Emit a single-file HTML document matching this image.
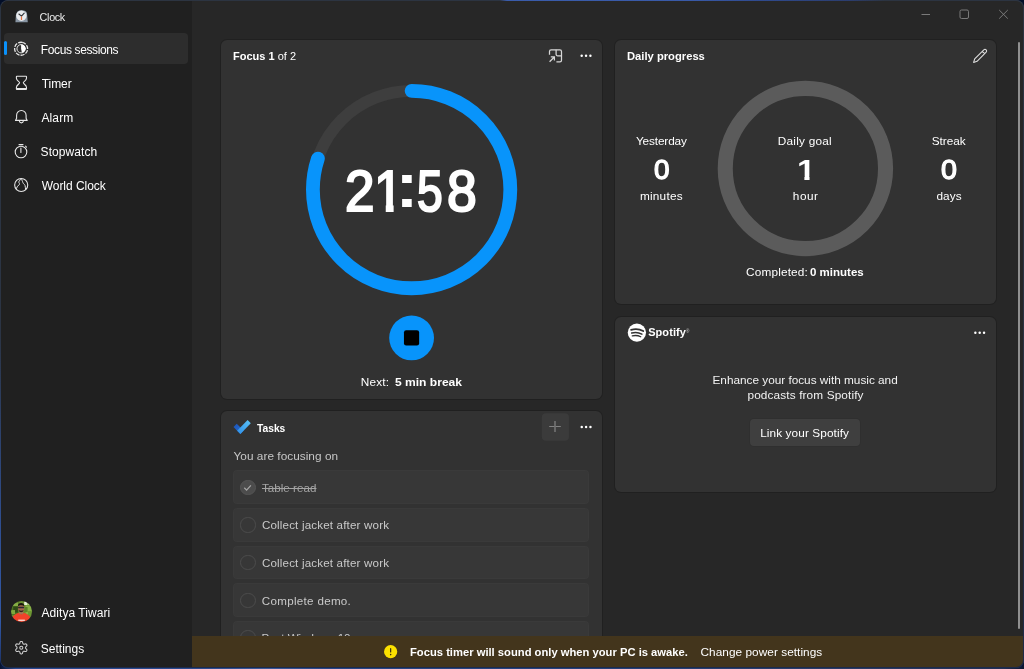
<!DOCTYPE html>
<html lang="en">
<head>
<meta charset="utf-8">
<title>Clock</title>
<style>
*{box-sizing:border-box;margin:0;padding:0}
html,body{width:1024px;height:669px;overflow:hidden;background:#020e28}
body{font-family:"Liberation Sans",sans-serif;color:#fff;position:relative}
.abs{position:absolute}
#desk{position:absolute;left:0;top:0;width:1024px;height:669px;background:linear-gradient(180deg,#020e28 0,#020e28 650px,rgba(2,14,40,0) 667px),linear-gradient(90deg,#07122e 0,#27488f 1.5%,#2a4a90 20%,#3a5a9c 26%,#27468a 32%,#23407c 60%,#2a3a66 85%,#222f55 98%,#0c1530 100%)}
#frame{position:absolute;left:0;top:0;width:1024px;height:668.3px;border-radius:8px;background:linear-gradient(180deg,#2c3441 0,#2b3444 50%,#2f4f92 80%,#3158a6 93%,#1b2f60 100%)}
#frame:after{content:"";position:absolute;left:1.3px;top:0;right:0;bottom:0;border-radius:8px;background:linear-gradient(180deg,#2c3441 0,#2a3242 60%,#1e2a48 100%)}
#topglow{position:absolute;left:0;top:0;width:1024px;height:1.1px;background:linear-gradient(90deg,rgba(58,92,171,0) 0,rgba(58,92,171,0) 500px,#3a5cab 507px,#395aa8 690px,#2f4a8e 760px,#2b3d6e 850px,rgba(43,61,110,0) 885px)}
#win{will-change:transform;position:absolute;left:1px;top:1px;width:1022px;height:666.3px;border-radius:7px;overflow:hidden;background:#272727}
#side{position:absolute;left:0;top:0;width:191.3px;height:667px;background:#202020}
.nav{position:absolute;left:3px;width:184px;height:31.4px;border-radius:4px}
.nav.sel{background:#2d2d2d}
.pill{position:absolute;left:0;top:8.8px;width:3px;height:13.8px;border-radius:1.5px;background:#0a91fb}
.card{position:absolute;background:#323232;border-radius:6px;box-shadow:0 0 0 1px rgba(0,0,0,.16)}
.tx{position:absolute;white-space:nowrap;transform-origin:0 50%}
.task{position:absolute;background:#373737;border-radius:4px;box-shadow:inset 0 0 0 1px rgba(255,255,255,.016)}
.ck{position:absolute;width:15.2px;height:15.2px;border-radius:50%;border:1px solid #4c4c4c}
svg{overflow:visible}
</style>
</head>
<body>
<div id="desk"></div>
<div id="frame"></div>
<div id="topglow"></div>
<div id="win">
<nav id="side">
<svg class="abs" style="left:13.7px;top:8.7px;width:13.2px;height:12.6px" viewBox="0 0 13.2 12.6">
<defs><linearGradient id="cg" x1="0" y1="0" x2="0" y2="1"><stop offset="0" stop-color="#9aa5b0"/><stop offset="1" stop-color="#8592a0"/></linearGradient></defs>
<path d="M0.4 12.3 L0.9 5.6 Q1.4 0.3 6.6 0.3 Q11.3 0.3 12 3.2 L12.8 12.3 Z" fill="url(#cg)"/>
<circle cx="6.4" cy="5.7" r="5.2" fill="#e9ebee"/>
<path d="M6.5 6.1 L3.9 4 M6.5 6.1 L9.2 3.1" stroke="#33363b" stroke-width="1.15" stroke-linecap="round" fill="none"/>
<path d="M6.5 6.5 V10" stroke="#e8713f" stroke-width="1.2" stroke-linecap="butt"/>
</svg>
<div class="tx" id="t_clock" style="left:38.62px;top:10px;font-size:10.8px;line-height:13px;color:#ececec;letter-spacing:-0.34px">Clock</div>
<div class="nav sel" style="top:31.7px"><div class="pill"></div><div class="tx" id="t_nav0" style="left:36.85px;top:10.3px;font-size:12px;line-height:14.4px;letter-spacing:-0.39px">Focus sessions</div></div>
<div class="nav" style="top:65.7px"><div class="tx" id="t_nav1" style="left:37.69px;top:10.3px;font-size:12px;line-height:14.4px;letter-spacing:-0.04px">Timer</div></div>
<div class="nav" style="top:99.7px"><div class="tx" id="t_nav2" style="left:37.5px;top:10.3px;font-size:12px;line-height:14.4px;letter-spacing:0.1px">Alarm</div></div>
<div class="nav" style="top:133.7px"><div class="tx" id="t_nav3" style="left:36.59px;top:10.3px;font-size:12px;line-height:14.4px;letter-spacing:0.07px">Stopwatch</div></div>
<div class="nav" style="top:167.7px"><div class="tx" id="t_nav4" style="left:37.68px;top:10.3px;font-size:12px;line-height:14.4px;letter-spacing:-0.03px">World Clock</div></div>
<svg class="abs" style="left:-1px;top:-1px;width:192px;height:230px" viewBox="0 0 192 230" fill="none" stroke="#e6e6e6" stroke-width="1.1" stroke-linecap="round" stroke-linejoin="round">
<circle cx="21.1" cy="48.75" r="6.5" stroke-width="1.3" stroke-dasharray="3.95 1.155" stroke-linecap="butt" transform="rotate(-80 21.1 48.75)"/>
<circle cx="21.1" cy="48.75" r="4.15" stroke-width="1"/>
<path d="M21.1 44.6 A4.15 4.15 0 0 1 21.9 52.85 L21.1 48.75 Z" fill="#fff" stroke="none"/>
<path d="M16.9 76.2 H26 Q26.5 76.2 26.5 76.7 V78.2 C26.5 80.8 23.3 81.6 23.3 82.8 C23.3 84 26.5 84.8 26.5 87.4 V88.9 Q26.5 89.4 26 89.4 H16.9 Q16.4 89.4 16.4 88.9 V87.4 C16.4 84.8 19.6 84 19.6 82.8 C19.6 81.6 16.4 80.8 16.4 78.2 V76.7 Q16.4 76.2 16.9 76.2 Z M16.9 88.5 H26"/>
<path d="M16.6 118.3 V115.2 A4.75 4.75 0 0 1 26.1 115.2 V118.3 L27.2 120.4 H15.5 Z M19.3 120.8 A2.1 2.6 0 0 0 23.4 120.8"/>
<circle cx="21" cy="152" r="5.8"/><path d="M19 144.6 H23 M20.9 148 V152.4 M25.6 146.2 L26.5 147.1"/>
<circle cx="21.2" cy="185" r="6.55"/>
<path d="M20.7 178.9 C20.2 180.6 18.4 181.3 18.9 182.6 C19.3 183.6 19.9 183.6 19.3 184.6 C18.6 185.8 17.3 185.8 17.1 187 C17 187.9 16.4 188.2 15.9 188.8 M21.6 178.9 C21.8 180.6 22.6 181.2 22.8 182.4 C23 183.6 24.5 184.2 25 185.4 C25.5 186.6 25.3 188.2 25.6 189.6" stroke-width="1"/>
</svg>
<svg class="abs" style="left:9.9px;top:600.4px;width:21.1px;height:21.1px" viewBox="0 0 21 21">
<defs><clipPath id="av"><circle cx="10.5" cy="10.5" r="10.45"/></clipPath><filter id="bl" x="-10%" y="-10%" width="120%" height="120%"><feGaussianBlur stdDeviation="0.55"/></filter></defs>
<g clip-path="url(#av)"><g filter="url(#bl)">
<rect x="-2" y="-2" width="25" height="25" fill="#6a8f30"/>
<rect x="-2" y="-2" width="9.5" height="16" fill="#4f7423"/><rect x="2.2" y="5.5" width="4.6" height="6" fill="#2f4a17"/><rect x="0" y="9" width="4" height="4" fill="#7fa83c"/><rect x="2" y="1.5" width="5" height="3.5" fill="#86ad45"/>
<rect x="13" y="-2" width="10" height="6" fill="#a9c77a"/><rect x="13.3" y="1" width="2.6" height="3" fill="#e6efd8"/><rect x="14.5" y="4.5" width="8" height="9" fill="#86b044"/><rect x="13.5" y="6" width="3" height="5" fill="#5d8429"/><rect x="17" y="10" width="4" height="4" fill="#6d9632"/>
<path d="M-1 23 C-0.5 16 3.5 13 8 11.8 L10.3 13.4 L12.6 11.8 C17 13 20.8 16 22 23 Z" fill="#f1432a"/>
<rect x="8.2" y="9.5" width="4" height="3.6" fill="#a87355"/>
<ellipse cx="10.1" cy="7.3" rx="3.05" ry="3.7" fill="#a06b4c"/>
<path d="M7.7 9 C8 12 12.2 12 12.5 9 C11.5 10 8.8 10 7.7 9 Z" fill="#2d221c"/>
<path d="M6.9 5.2 C6.4 0.8 13.7 0.8 13.2 5.2 C12 3.8 8.1 3.8 6.9 5.2 Z" fill="#15130f"/>
<rect x="7.1" y="5.65" width="5.9" height="1.6" rx="0.5" fill="#2a2530"/>
<rect x="7.2" y="18.5" width="6.6" height="1.5" fill="#fbd0c8"/>
</g></g></svg>
<div class="tx" id="t_acct" style="left:40.51px;top:605px;font-size:12px;line-height:14.4px;letter-spacing:0.05px">Aditya Tiwari</div>
<svg class="abs" style="left:-1px;top:629px;width:60px;height:38px" viewBox="0 630 60 38" fill="none" stroke="#cfcfcf" stroke-width="1.05" stroke-linejoin="round"><path d="M25.6 647.7 L25.58 648.07 L25.72 648.48 L26.37 649.06 L26.95 649.76 L26.92 650.32 L26.67 650.8 L26.38 651.26 L25.9 651.56 L25.01 651.41 L24.19 651.14 L23.77 651.22 L23.45 651.42 L23.12 651.6 L22.84 651.92 L22.66 652.77 L22.34 653.62 L21.84 653.88 L21.3 653.9 L20.76 653.88 L20.26 653.62 L19.94 652.77 L19.76 651.92 L19.48 651.6 L19.15 651.42 L18.83 651.22 L18.41 651.14 L17.59 651.41 L16.7 651.56 L16.22 651.26 L15.93 650.8 L15.68 650.32 L15.65 649.76 L16.23 649.06 L16.88 648.48 L17.02 648.07 L17 647.7 L17.02 647.33 L16.88 646.92 L16.23 646.34 L15.65 645.64 L15.68 645.08 L15.93 644.6 L16.22 644.14 L16.7 643.84 L17.59 643.99 L18.41 644.26 L18.83 644.18 L19.15 643.98 L19.48 643.8 L19.76 643.48 L19.94 642.63 L20.26 641.78 L20.76 641.52 L21.3 641.5 L21.84 641.52 L22.34 641.78 L22.66 642.63 L22.84 643.48 L23.12 643.8 L23.45 643.98 L23.77 644.18 L24.19 644.26 L25.01 643.99 L25.9 643.84 L26.38 644.14 L26.67 644.6 L26.92 645.08 L26.95 645.64 L26.37 646.34 L25.72 646.92 L25.58 647.33 Z"/><circle cx="21.3" cy="647.7" r="1.55"/></svg>
<div class="tx" id="t_set" style="left:39.78px;top:641px;font-size:12px;line-height:14.4px;letter-spacing:0.01px">Settings</div>
</nav>
<svg class="abs" style="left:-1px;top:-1px;width:1024px;height:30px" viewBox="0 0 1024 30" fill="none" stroke="#7e7e7e" stroke-width="0.95">
<path d="M921.5 14.5 H930"/><rect x="960" y="10" width="8.5" height="8.5" rx="1.5"/><path d="M999.2 10 L1007.8 18.6 M1007.8 10 L999.2 18.6"/>
</svg>
<div class="abs" style="left:1017px;top:41px;width:2px;height:586.5px;background:#909090;border-radius:1px"></div>
<section class="card" style="left:220px;top:38.5px;width:381px;height:359.5px">
<div class="tx" id="t_fh" style="left:11.61px;top:9.5px;font-size:11.6px;line-height:13.9px;transform:scaleX(0.9499)"><b>Focus 1</b> of 2</div>
<svg class="abs" style="left:0px;top:0px;width:381px;height:360px" viewBox="221 39.5 381 360">
<g fill="none" stroke="#d8d8d8" stroke-width="1.25">
<path d="M549.5 54.2 V50.9 A1.6 1.6 0 0 1 551.1 49.3 H559.9 A1.6 1.6 0 0 1 561.5 50.9 V59.7 A1.6 1.6 0 0 1 559.9 61.3 H556.4"/>
<path d="M556.1 49.3 V53.8 A1.5 1.5 0 0 0 557.6 55.3 H561.5"/>
<path d="M549.6 61.2 L554.3 56.5 M550.8 56.4 H554.4 V60"/>
</g>
<g fill="#fff"><circle cx="581.7" cy="55.3" r="1.22"/><circle cx="586.05" cy="55.3" r="1.22"/><circle cx="590.4" cy="55.3" r="1.22"/></g>
<circle cx="411.6" cy="189.05" r="98.7" fill="none" stroke="#3e3e3e" stroke-width="11.8"/>
<circle cx="411.6" cy="189.05" r="98.7" fill="none" stroke="#0894fb" stroke-width="13.8" stroke-linecap="round" stroke-dasharray="495.95 620.15" transform="rotate(-90 411.6 189.05)"/>
<circle cx="411.6" cy="337.45" r="22.4" fill="#0894fb"/><rect x="403.95" y="329.7" width="15.2" height="15.2" rx="2.2" fill="#000"/>
</svg>
<div id="time" class="abs" style="left:0;top:0"><span class="tx" id="t_tm0" style="left:123.66px;top:117.5px;font-size:57px;line-height:68.4px;transform:scaleX(0.9305);-webkit-text-stroke:2.2px #fff">2</span><span class="tx" id="t_tm1" style="left:152.84px;top:117.5px;font-size:57px;line-height:68.4px;transform:scaleX(0.9216);-webkit-text-stroke:2.2px #fff;clip-path:polygon(-10% 0,110% 0,110% 67%,67.2% 67%,67.2% 100%,40.2% 100%,40.2% 67%,-10% 67%)">1</span><span class="tx" id="t_tm2" style="left:175.6px;top:112.5px;font-size:57px;line-height:68.4px;transform:scaleX(1.2508);-webkit-text-stroke:2.2px #fff">:</span><span class="tx" id="t_tm3" style="left:196.19px;top:117.5px;font-size:57px;line-height:68.4px;transform:scaleX(0.8102);-webkit-text-stroke:2.2px #fff">5</span><span class="tx" id="t_tm4" style="left:225.93px;top:117.5px;font-size:57px;line-height:68.4px;transform:scaleX(0.9389);-webkit-text-stroke:2.2px #fff">8</span></div>
<div class="tx" id="t_next" style="left:139.65px;top:335.5px;font-size:11.8px;line-height:14.2px;letter-spacing:0.24px">Next:</div>
<div class="tx" id="t_next2" style="left:173.73px;top:335.5px;font-size:11.8px;line-height:14.2px;font-weight:bold;transform:scaleX(1.022)">5 min break</div>
</section>
<section class="card" style="left:220px;top:410px;width:381px;height:289px">
<svg class="abs" style="left:0;top:0;width:381px;height:60px" viewBox="221 411 381 60">
<defs><linearGradient id="td" x1="0" y1="0" x2="1" y2="1"><stop offset="0" stop-color="#1a52b5"/><stop offset="1" stop-color="#2a73d8"/></linearGradient>
<linearGradient id="tl" x1="1" y1="0" x2="0" y2="1"><stop offset="0" stop-color="#5cc4f7"/><stop offset="1" stop-color="#2d8ee8"/></linearGradient></defs>
<path d="M233.5 426.9 L236.7 423.7 L243.6 430.6 L240.4 433.9 Z" fill="url(#td)"/>
<path d="M240.4 433.9 L237.15 430.65 L247.6 420.1 L250.8 423.3 Z" fill="url(#tl)"/>
<rect x="541.85" y="413.3" width="27.05" height="27.4" rx="4" fill="#3b3b3b"/>
<path d="M549.2 426.5 H560.8" stroke="#8a8a8a" stroke-width="0.9"/><path d="M555 421 V432" stroke="#707070" stroke-width="1.7"/>
<g fill="#fff"><circle cx="581.75" cy="427" r="1.22"/><circle cx="586.1" cy="427" r="1.22"/><circle cx="590.45" cy="427" r="1.22"/></g>
</svg>
<div class="tx" id="t_th" style="left:36.24px;top:11px;font-size:11.5px;line-height:13.8px;font-weight:bold;transform:scaleX(0.8908)">Tasks</div>
<div class="tx" id="t_you" style="left:12.49px;top:38px;font-size:11.8px;line-height:14.2px;color:#c6c6c6;letter-spacing:0.04px">You are focusing on</div>
<div class="task" style="left:12.3px;top:59.35px;width:356.1px;height:33.5px">
<div class="ck" style="left:7.1px;top:9.35px;background:#4c4c4c;border-color:#555"></div>
<svg class="abs" style="left:9.9px;top:12.6px;width:9px;height:9px" viewBox="0 0 9 9"><path d="M1.3 4.8 L3.6 7.1 L7.9 2.3" fill="none" stroke="#a6a6a6" stroke-width="1.25"/></svg>
<div class="tx" id="t_task0" style="left:28.69px;top:10.65px;font-size:11.6px;line-height:13.9px;color:#a4a4a4;letter-spacing:0.03px;text-decoration:line-through">Table read</div>
</div>
<div class="task" style="left:12.3px;top:97.05px;width:356.1px;height:33.5px">
<div class="ck" style="left:7.1px;top:9.35px"></div>
<div class="tx" id="t_task1" style="left:28.58px;top:9.95px;font-size:11.6px;line-height:13.9px;color:#c9c9c9;letter-spacing:0.17px">Collect jacket after work</div>
</div>
<div class="task" style="left:12.3px;top:134.75px;width:356.1px;height:33.5px">
<div class="ck" style="left:7.1px;top:9.35px"></div>
<div class="tx" id="t_task2" style="left:28.58px;top:10.25px;font-size:11.6px;line-height:13.9px;color:#c9c9c9;letter-spacing:0.17px">Collect jacket after work</div>
</div>
<div class="task" style="left:12.3px;top:172.45px;width:356.1px;height:33.5px">
<div class="ck" style="left:7.1px;top:9.35px"></div>
<div class="tx" id="t_task3" style="left:28.46px;top:10.55px;font-size:11.6px;line-height:13.9px;color:#c9c9c9;letter-spacing:0.31px">Complete demo.</div>
</div>
<div class="task" style="left:12.3px;top:210.15px;width:356.1px;height:33.5px">
<div class="ck" style="left:7.1px;top:9.35px"></div>
<div class="tx" id="t_task4" style="left:28.12px;top:9.85px;font-size:11.6px;line-height:13.9px;color:#c9c9c9;letter-spacing:-0.03px">Post Windows 10</div>
</div>
</section>
<section class="card" style="left:613.5px;top:38.5px;width:381.5px;height:264.5px">
<div class="tx" id="t_dh" style="left:12px;top:9.5px;font-size:11.6px;line-height:13.9px;font-weight:bold;transform:scaleX(0.9665)">Daily progress</div>
<svg class="abs" style="left:0;top:0;width:381px;height:264px" viewBox="614.5 39.5 381 264">
<g transform="translate(973.1 61.9) rotate(-45)" fill="none" stroke="#e0e0e0" stroke-width="1.05" stroke-linejoin="round"><path d="M0 0 L3.2 -1.65 H16.1 A1.65 1.65 0 0 1 16.1 1.65 H3.2 Z M14 -1.65 V1.65"/></g>
<circle cx="804.9" cy="168" r="80.15" fill="none" stroke="#5b5b5b" stroke-width="15.1"/>
</svg>
<div class="tx" id="t_y1" style="left:21.42px;top:94.5px;font-size:11.8px;line-height:14.2px;letter-spacing:-0.13px">Yesterday</div>
<div class="tx" id="t_y2" style="left:39.61px;top:113.5px;font-size:27.8px;line-height:33.4px;transform:scaleX(1.003);-webkit-text-stroke:1.3px #fff">0</div>
<div class="tx" id="t_y3" style="left:25.39px;top:149.5px;font-size:11.8px;line-height:14.2px;letter-spacing:0.24px">minutes</div>
<div class="tx" id="t_g1" style="left:163.29px;top:94.5px;font-size:11.8px;line-height:14.2px;letter-spacing:0.23px">Daily goal</div>
<div class="tx" id="t_g2" style="left:182.28px;top:112.5px;font-size:30.1px;line-height:36.1px;font-weight:bold;transform:scaleX(1.1006);clip-path:polygon(-10% 0,110% 0,110% 68%,68% 68%,68% 100%,40% 100%,40% 68%,-10% 68%)">1</div>
<div class="tx" id="t_g3" style="left:178.37px;top:149.5px;font-size:11.8px;line-height:14.2px;letter-spacing:0.51px">hour</div>
<div class="tx" id="t_s1" style="left:317.24px;top:94.5px;font-size:11.8px;line-height:14.2px;letter-spacing:-0.04px">Streak</div>
<div class="tx" id="t_s2" style="left:326.41px;top:113.5px;font-size:27.8px;line-height:33.4px;transform:scaleX(1.0302);-webkit-text-stroke:1.3px #fff">0</div>
<div class="tx" id="t_s3" style="left:321.98px;top:149.5px;font-size:11.8px;line-height:14.2px;letter-spacing:0.09px">days</div>
<div class="tx" id="t_c1" style="left:131.56px;top:225.5px;font-size:11.8px;line-height:14.2px;letter-spacing:0.16px">Completed:</div>
<div class="tx" id="t_c2" style="left:195.94px;top:225.5px;font-size:11.8px;line-height:14.2px;font-weight:bold;transform:scaleX(0.9754)">0 minutes</div>
</section>
<section class="card" style="left:613.5px;top:315.5px;width:381.5px;height:175.2px">
<svg class="abs" style="left:0;top:0;width:381px;height:40px" viewBox="614.5 316.5 381 40">
<circle cx="636.4" cy="332.1" r="9.15" fill="#fff"/>
<g fill="none" stroke="#323232" stroke-linecap="round"><path d="M630.6 329.3 C634.4 328.2 639.1 328.5 642.7 330.5" stroke-width="1.9"/><path d="M631.2 332.5 C634.5 331.6 638.3 331.9 641.4 333.6" stroke-width="1.55"/><path d="M631.8 335.4 C634.5 334.7 637.6 334.9 640.2 336.3" stroke-width="1.3"/></g>
<g fill="#fff"><circle cx="974.85" cy="332.3" r="1.22"/><circle cx="979.2" cy="332.3" r="1.22"/><circle cx="983.55" cy="332.3" r="1.22"/></g>
</svg>
<div class="tx" id="t_sp" style="left:33.64px;top:9.5px;font-size:11px;line-height:13.2px;font-weight:bold;letter-spacing:0.08px">Spotify</div>
<div class="tx" style="left:71.6px;top:12.3px;font-size:4.5px;line-height:5px;color:#c8c8c8">&reg;</div>
<div class="tx" id="t_sp1" style="left:97.98px;top:56.5px;font-size:11.8px;line-height:14.2px;color:#f2f2f2;letter-spacing:-0.01px">Enhance your focus with music and</div>
<div class="tx" id="t_sp2" style="left:132.97px;top:71.5px;font-size:11.8px;line-height:14.2px;color:#f2f2f2;letter-spacing:0.13px">podcasts from Spotify</div>
<div class="abs" style="left:135.2px;top:102.4px;width:110.8px;height:26.9px;border-radius:4px;background:#3f3f3f;box-shadow:0 0 0 1px rgba(0,0,0,.06)"></div>
<div class="tx" id="t_lk" style="left:145.66px;top:109.5px;font-size:11.8px;line-height:14.2px;letter-spacing:0.1px">Link your Spotify</div>
</section>
<div class="abs" id="bar" style="left:191.3px;top:634.8px;width:831.2px;height:32.2px;background:#43351c">
<svg class="abs" style="left:191.7px;top:8.95px;width:13.3px;height:13.3px" viewBox="0 0 13.3 13.3"><circle cx="6.65" cy="6.65" r="6.6" fill="#fce100"/><rect x="6.05" y="3.1" width="1.2" height="4.5" rx="0.6" fill="#3a2e10"/><circle cx="6.65" cy="9.6" r="0.8" fill="#3a2e10"/></svg>
<div class="tx" id="t_b1" style="left:217.62px;top:9.2px;font-size:11.8px;line-height:14.2px;font-weight:bold;transform:scaleX(0.9505)">Focus timer will sound only when your PC is awake.</div>
<div class="tx" id="t_b2" style="left:508.25px;top:9.2px;font-size:11.8px;line-height:14.2px;letter-spacing:0.05px">Change power settings</div>
</div>
</div>
</body>
</html>
